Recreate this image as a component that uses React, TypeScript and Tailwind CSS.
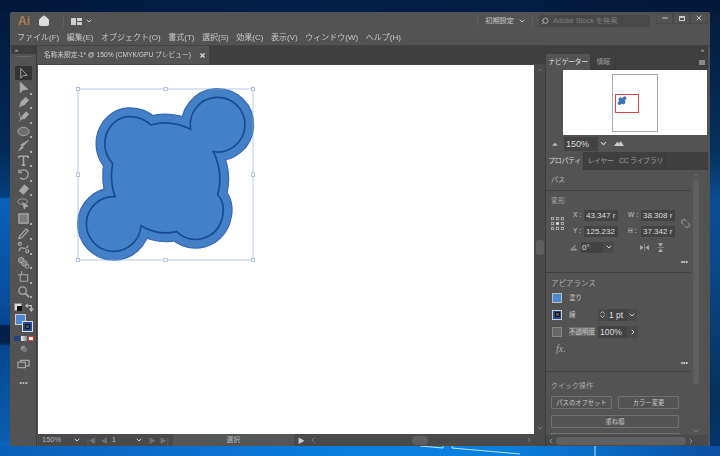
import React from "react";
import { Home, ChevronDown, ChevronUp, ChevronLeft, ChevronRight, Search, Minus, X, ChevronsUpDown, Unlink2 } from "lucide-react";

const FONT = "font-['Liberation_Sans','Noto_Sans_CJK_JP',sans-serif]";
const BLOB = "M377 148 A82 82 0 1 1 445 215 Q476 280 458 345 Q484 372 470 420 C452 478 380 498 335 455 Q280 468 228 437 A82 82 0 1 1 150 350 Q133 300 143 250 C95 200 125 115 190 110 Q228 108 258 135 Q315 118 377 148 Z";

const T = ({ children }: { children: React.ReactNode }) => (
  <svg viewBox="0 0 14 14" className="w-[13px] h-[13px]" fill="#a8a8a8" stroke="#a8a8a8" strokeWidth="1">{children}</svg>
);

const tools: { n: React.ReactNode; corner?: boolean; active?: boolean }[] = [
  { n: <path d="M4 1.5 L4 12 L6.8 9.3 L11 9 Z" fill="none" />, active: true },
  { n: <path d="M3.5 1 L3.5 12.5 L6.5 9.5 L11.5 9 Z" />, corner: true },
  { n: <path d="M9.5 1.5 L12.5 4.5 L8 9.5 L3 11 L4.5 6 Z M2 12.5 L4 10.5" />, corner: true },
  { n: <g><path d="M10 2 L12.5 4.5 L8.5 9 L4.5 10 L6 6 Z" /><path d="M3 2.5 C0 6 6 5 3 12" fill="none" /></g>, corner: true },
  { n: <ellipse cx="7" cy="7" rx="6" ry="4.5" fill="#6e6e6e" />, corner: true },
  { n: <path d="M12.5 1.5 L6 8 L4 6.5 Z M5 8 L2 12.5 L7 9" />, corner: true },
  { n: <path d="M2 2.5 H12 V4.5 M2 4.5 V2.5 M7 2.5 V12 M5 12 H9" fill="none" strokeWidth="1.6" />, corner: true },
  { n: <g fill="none" strokeWidth="1.4"><path d="M3 4 A5 5 0 1 1 3.5 10.5" /><path d="M2 1.5 V5 H5.5" /></g>, corner: true },
  { n: <path d="M8 2 L12.5 6 L7 12 L2.5 8.5 Z" />, corner: true },
  { n: <g fill="none"><ellipse cx="6" cy="5" rx="5" ry="3" /><path d="M6 6 L12 10 L9 10.5 L8 13 Z" fill="#a8a8a8" /></g> },
  { n: <rect x="2" y="2" width="10" height="10" fill="#7d7d7d" stroke="#bdbdbd" />, corner: true },
  { n: <path d="M10 2 L12 4 L5 11.5 L2 12.5 L3 9.5 Z" fill="none" strokeWidth="1.3" />, corner: true },
  { n: <g fill="none" strokeWidth="1.3"><path d="M2 11 C5 2 8 13 12 5" /><circle cx="3" cy="3" r="1.6" /><circle cx="11" cy="11" r="1.6" /></g>, corner: true },
  { n: <g><circle cx="4.5" cy="4.5" r="3" fill="#7d7d7d" /><circle cx="8" cy="8" r="3" fill="#7d7d7d" /><circle cx="11" cy="11" r="2" fill="none" /></g>, corner: true },
  { n: <path d="M3.5 5 H11.5 V12 H3.5 Z M1 5 H3.5 M5 1 V5" fill="none" strokeWidth="1.1" />, corner: true },
  { n: <g fill="none" strokeWidth="1.4"><circle cx="6" cy="6" r="4" /><path d="M9 9 L13 13" strokeWidth="2" /></g>, corner: true },
];

function Tools() {
  return (
    <div className="w-[26px] ml-px flex flex-col items-center bg-[#535353] border-r border-[#3c3c3c]">
      <div className="h-[8px] w-full bg-[#3e3e3e] text-[6px] leading-[8px] text-[#ccc] pl-[4px]">»</div>
      <div className="h-px w-[14px] mt-[2px] bg-[#6a6a6a]" />
      <div className="flex flex-col mt-[9px] gap-[0.55px]">
        {tools.map((t, i) => (
          <div key={i} className={`relative w-[17px] h-[14px] flex items-center justify-center rounded-[1px] ${t.active ? "bg-[#333]" : ""}`}>
            <T>{t.n}</T>
            {t.corner && <span className="absolute right-0 bottom-0 w-[2px] h-[2px] bg-[#aaa]" />}
          </div>
        ))}
      </div>
      <div className="flex w-[20px] justify-between mt-[5px] text-[#ddd]">
        <div className="relative w-[8px] h-[8px] bg-[#ddd] border border-[#888]">
          <span className="absolute right-[-1px] bottom-[-1px] w-[5px] h-[5px] bg-[#111]" />
        </div>
        <svg viewBox="0 0 10 10" className="w-[9px] h-[9px]" fill="none" stroke="#bbb" strokeWidth="1.3"><path d="M1 3 H7 V8 M5 6 L7 9 L9 6 M3 1 L1 3 L3 5" /></svg>
      </div>
      <div className="relative w-[18px] h-[18px] mt-[2px]">
        <div className="w-[11px] h-[11px] bg-[#4a88cf] border border-[#ccc]" />
        <div className="absolute right-0 bottom-0 w-[11px] h-[11px] bg-[#1b4c98] border border-[#ddd] flex items-center justify-center">
          <span className="w-[5px] h-[5px] bg-[#535353] border border-[#111]" />
        </div>
      </div>
      <div className="flex gap-px mt-[4px]">
        <span className="w-[6px] h-[5px] bg-[#1f3f7e]" />
        <span className="w-[6px] h-[5px] bg-[linear-gradient(90deg,#eee,#888)]" />
        <span className="w-[6px] h-[5px] bg-white border border-[#d33]" />
      </div>
      <svg viewBox="0 0 10 10" className="w-[8px] h-[8px] mt-[4px]"><circle cx="4" cy="4" r="3" fill="#999" /><circle cx="6" cy="6" r="3" fill="#777" /></svg>
      <svg viewBox="0 0 14 10" className="w-[13px] h-[10px] mt-[6px]" fill="#535353" stroke="#bbb"><rect x="4" y="1" width="9" height="6" /><rect x="1" y="3" width="8" height="6" /></svg>
      <div className="text-[#bbb] text-[8px] leading-[9px] mt-[9px]">•••</div>
    </div>
  );
}

function Artwork() {
  const pts = [[39, 27], [302, 27], [564, 27], [39, 284], [564, 284], [39, 540], [302, 540], [564, 540]];
  return (
    <svg viewBox="0 0 600 570" className="w-[200px] h-[190px] ml-[27px] mt-[15px]">
      <path d={BLOB} fill="#3968bb" stroke="#3968bb" strokeWidth="56" strokeLinejoin="round" />
      <path d={BLOB} fill="#4380c5" stroke="#4380c5" strokeWidth="49" strokeLinejoin="round" />
      <path d={BLOB} fill="#4380c5" stroke="#194a94" strokeWidth="5" />
      <rect x="39" y="27" width="525" height="513" fill="none" stroke="#8fadde" strokeWidth="2" />
      {pts.map(([x, y]) => (
        <rect key={`${x}-${y}`} x={x - 5} y={y - 5} width="10" height="10" fill="#fff" stroke="#8fadde" strokeWidth="2" />
      ))}
    </svg>
  );
}

function Status() {
  const G = "#6f6f6f";
  return (
    <div className="h-[12px] flex items-center bg-[#4a4a4a] text-[7.5px] text-[#b5b5b5] leading-none">
      <span className="w-[34px] pl-[4px]">150%</span>
      <ChevronDown size={8} strokeWidth={3} className="ml-[1px] text-[#ccc]" />
      <span className="ml-[6px] flex gap-[5px] text-[7px]" style={{ color: G }}><span>|◀</span><span>◀</span></span>
      <span className="ml-[3px] w-[24px] pl-[1px]">1</span>
      <ChevronDown size={8} strokeWidth={3} className="text-[#ccc]" />
      <span className="ml-[6px] flex gap-[4px] text-[7px]" style={{ color: G }}><span>▶</span><span>▶|</span></span>
      <span className="w-[121px] ml-[4px] h-full bg-[#555] text-center leading-[12px] text-[7px]">選択</span>
      <span className="ml-[4px] text-[7px] text-[#ccc]">▶</span>
      <ChevronLeft size={8} strokeWidth={2} className="ml-[4px] text-[#999]" />
      <div className="w-[84px]" />
      <span className="ml-[11px] w-[16px] h-[9px] rounded-full bg-[#5f5f5f]" />
      <div className="flex-1" />
      <ChevronRight size={8} strokeWidth={2} className="text-[#999] mr-[12px]" />
    </div>
  );
}

function Tab({ label, on, w }: { label: string; on?: boolean; w: number }) {
  return (
    <div style={{ width: w }} className={`h-full flex items-center justify-center text-[7px] whitespace-nowrap tracking-[-0.4px] border-r border-[#3a3a3a] ${on ? "bg-[#535353] text-[#d8d8d8]" : "text-[#9a9a9a]"}`}>{label}</div>
  );
}

function Field({ label, value, lw }: { label: string; value: string; lw: number }) {
  return (
    <div className="flex items-center">
      <span style={{ width: lw }} className="text-[6.5px] font-bold text-[#a5a5a5] pl-[1px] whitespace-nowrap">{label} :</span>
      <span className="w-[34px] h-[11px] bg-[#434343] text-[8px] leading-[11px] text-[#dcdcdc] pl-[2px] whitespace-nowrap">{value}</span>
    </div>
  );
}

function Divider() {
  return <div className="h-px w-[145px] bg-[#404040]" />;
}

function Panel() {
  return (
    <div className="w-[163px] flex flex-col bg-[#535353] border-l border-[#3c3c3c]">
      <div className="h-[8px] bg-[#3e3e3e] text-[6px] leading-[8px] text-[#ccc] text-right pr-[4px]">»</div>
      <div className="h-[16px] bg-[#3f3f3f] flex items-center">
        <Tab label="ナビゲーター" on w={45} />
        <Tab label="情報" w={25} />
        <div className="flex-1" />
        <div className="w-[6px] h-[5px] mr-[3px] bg-[#888]" />
      </div>
      <div className="h-[65px] flex">
        <div className="w-[17px]" />
        <div className="flex-1 bg-white flex items-center pl-[49px]">
          <div className="w-[46px] h-[58px] border border-[#aaa] bg-white pl-[2px] pt-[19px]">
            <div className="w-[24px] h-[19px] border border-[#e04545] pl-[1px] pt-[1px]">
              <svg viewBox="0 0 600 570" className="w-[10px] h-[9.5px]"><path d={BLOB} fill="#3a70b8" stroke="#3a70b8" strokeWidth="60" /></svg>
            </div>
          </div>
        </div>
        <div className="w-px" />
      </div>
      <div className="h-[17px] flex items-center text-[#ccc]">
        <svg viewBox="0 0 10 6" className="w-[6px] h-[4px] ml-[6px]" fill="#bbb"><path d="M0 6 L5 1 L10 6 Z" /></svg>
        <span className="ml-[6px] w-[34px] h-[14px] bg-[#434343] text-[9px] leading-[14px] pl-[2px] text-[#ddd]">150%</span>
        <ChevronDown size={9} strokeWidth={3} className="ml-[1px]" />
        <svg viewBox="0 0 12 6" className="w-[10px] h-[5px] ml-[6px]" fill="#ccc"><path d="M0 6 L4 1 L6 3 L8 0 L12 6 Z" /></svg>
      </div>
      <div className="h-[18px] bg-[#3f3f3f] flex items-center pr-[18px]">
        <Tab label="プロパティ" on w={38} />
        <Tab label="レイヤー" w={34} />
        <Tab label="CC ライブラリ" w={47} />
      </div>
      <div className="flex flex-1 min-h-0">
        <div className="w-[145px] flex flex-col text-[#a9a9a9] text-[7px] overflow-hidden">
          <div className="h-[20px] pl-[5px] leading-[20px] text-[#b5b5b5]">パス</div>
          <Divider />
          <div className="pl-[5px] mt-[3px] h-[14px] leading-[14px] text-[7px]">変形</div>
          <div className="flex mt-[2px] pl-[5px]">
            <svg viewBox="0 0 13 13" className="w-[13px] h-[13px] mt-[7px]" fill="none" stroke="#bbb" strokeWidth="0.8">
              {[1.5, 6.5, 11.5].map((y) => [1.5, 6.5, 11.5].map((x) => (
                <rect key={`${x}${y}`} x={x - 1.2} y={y - 1.2} width="2.4" height="2.4" fill={x === 6.5 && y === 6.5 ? "#fff" : "none"} />
              )))}
            </svg>
            <div className="flex flex-col gap-[5px] ml-[8px]">
              <div className="flex gap-[9px]"><Field label="X" value="43.347 r" lw={12} /><Field label="W" value="38.308 r" lw={14} /></div>
              <div className="flex gap-[9px]"><Field label="Y" value="125.232" lw={12} /><Field label="H" value="37.342 r" lw={14} /></div>
            </div>
            <Unlink2 size={11} strokeWidth={1.5} className="ml-[5px] mt-[8px] rotate-45 text-[#bbb]" />
          </div>
          <div className="flex items-center mt-[5px] pl-[24px] h-[11px]">
            <svg viewBox="0 0 10 8" className="w-[8px] h-[7px]" fill="none" stroke="#bbb"><path d="M9 7 H1 L7 1 M6 7 V4" /></svg>
            <span className="ml-[3px] w-[22px] h-[11px] bg-[#434343] text-[#ddd] text-[8px] leading-[11px] pl-[1px]">0°</span>
            <span className="w-[11px] h-[11px] bg-[#4a4a4a] flex items-center justify-center"><ChevronDown size={8} strokeWidth={3} className="text-[#ccc]" /></span>
            <svg viewBox="0 0 10 8" className="w-[9px] h-[7px] ml-[26px]" fill="#aaa"><path d="M0 1 L4 4 L0 7 Z M10 1 L6 4 L10 7 Z M4.7 0 H5.3 V8 H4.7 Z" /></svg>
            <svg viewBox="0 0 8 10" className="w-[7px] h-[9px] ml-[8px]" fill="#aaa"><path d="M1 0 L4 4 L7 0 Z M1 10 L4 6 L7 10 Z M0 4.7 H8 V5.3 H0 Z" /></svg>
          </div>
          <div className="h-[11px] mt-[3px] text-right pr-[3px] text-[7px] leading-[11px] text-[#ccc]">•••</div>
          <div className="mt-[5px]"><Divider /></div>
          <div className="pl-[5px] mt-[5px] h-[12px] leading-[12px] text-[7.5px]">アピアランス</div>
          <div className="flex items-center pl-[6px] mt-[3px] h-[10px] text-[#c5c5c5] text-[6.5px]">
            <span className="w-[10px] h-[10px] bg-[#4a88cf] border border-[#bbb]" />
            <span className="ml-[7px]">塗り</span>
          </div>
          <div className="flex items-center pl-[6px] mt-[6px] h-[12px] text-[#c5c5c5] text-[6.5px]">
            <span className="w-[10px] h-[10px] bg-[#1b4c98] border border-[#ccc] flex items-center justify-center"><span className="w-[5px] h-[5px] bg-[#535353] border border-[#111]" /></span>
            <span className="ml-[7px] w-[26px]">線</span>
            <span className="ml-[3px] w-[10px] h-[12px] bg-[#4a4a4a] flex items-center"><ChevronsUpDown size={9} className="text-[#ccc]" /></span>
            <span className="w-[19px] h-[12px] bg-[#434343] text-[8.5px] leading-[12px] text-[#ddd] pl-[1px]">1 pt</span>
            <span className="w-[10px] h-[12px] bg-[#4a4a4a] flex items-center justify-center"><ChevronDown size={8} strokeWidth={3} className="text-[#ccc]" /></span>
          </div>
          <div className="flex items-center pl-[6px] mt-[5px] h-[12px] text-[#c5c5c5] text-[6.5px]">
            <span className="w-[10px] h-[10px] border border-[#888] bg-[#666]" />
            <span className="ml-[7px] w-[26px] whitespace-nowrap bg-[#6a6a6a]">不透明度</span>
            <span className="ml-[3px] w-[29px] h-[12px] bg-[#434343] text-[8.5px] leading-[12px] text-[#ddd] pl-[2px]">100%</span>
            <span className="w-[11px] h-[12px] bg-[#4a4a4a] flex items-center justify-center"><ChevronRight size={8} strokeWidth={3} className="text-[#ccc]" /></span>
          </div>
          <div className="pl-[10px] mt-[5px] h-[11px] font-['Liberation_Serif',serif] italic text-[10px] leading-[11px] text-[#aaa]">fx.</div>
          <div className="h-[11px] mt-[3px] text-right pr-[3px] text-[7px] leading-[11px] text-[#ccc]">•••</div>
          <div className="mt-[3px]"><Divider /></div>
          <div className="pl-[5px] mt-[8px] h-[12px] leading-[12px] text-[7px]">クイック操作</div>
          <div className="flex gap-[6px] pl-[5px] mt-[4px] text-[#c8c8c8] text-[6.3px]">
            <div className="w-[61px] h-[13px] border border-[#707070] rounded-[1px] text-center leading-[11px] whitespace-nowrap">パスのオフセット</div>
            <div className="w-[61px] h-[13px] border border-[#707070] rounded-[1px] text-center leading-[11px] whitespace-nowrap">カラー変更</div>
          </div>
          <div className="ml-[5px] mt-[6px] w-[128px] h-[13px] border border-[#707070] rounded-[1px] text-center text-[#c8c8c8] text-[6.3px] leading-[11px]">重ね順</div>
          <div className="ml-[5px] mt-[5px] w-[128px] h-[4px] border-t border-x border-[#707070] rounded-[1px]" />
        </div>
        <div className="w-[7px] ml-[1px] flex flex-col items-center pt-[1px]">
          <ChevronUp size={8} className="text-[#888] shrink-0" />
          <div className="w-[6px] h-[205px] bg-[#5e5e5e] rounded-full" />
          <div className="flex-1" />
          <ChevronDown size={8} className="text-[#999] shrink-0" />
        </div>
      </div>
      <div className="h-[11px] flex items-center bg-[#4a4a4a] text-[#aaa]">
        <ChevronLeft size={8} className="ml-[1px]" />
        <div className="w-[130px] h-[8px] ml-[1px] rounded-full bg-[#5f5f5f]" />
        <ChevronRight size={8} className="ml-[1px]" />
      </div>
    </div>
  );
}

export default function App() {
  return (
    <div className={`${FONT} relative w-[720px] h-[456px] overflow-hidden pl-[10px] pr-[10px] pt-[12px] pb-[10px] bg-[linear-gradient(180deg,#02183a_0px,#032a58_150px,#04407f_197px,#0a62ba_199px,#074e9c_300px,#054590_324px,#02204a_326px,#02204a_343px,#05478f_346px,#0a5fb0_440px,#0a6fd0_456px)]`}>
      <div className="absolute right-0 top-0 w-[10px] h-[446px] bg-[linear-gradient(180deg,#041a38_0px,#05305f_150px,#0a4d90_200px,#0a4a8a_260px,#05305f_400px,#04356e_446px)]" />
      <div className="absolute top-0 left-0 right-0 h-[12px] bg-[linear-gradient(90deg,#02183a_0%,#03204a_40%,#04193a_100%)]" />
      <div className="absolute left-0 right-0 bottom-0 h-[10px] bg-[linear-gradient(90deg,#0a5fb8_0%,#0b7fe0_50%,#0a80dd_70%,#0a50a4_100%)]">
        <svg viewBox="0 0 720 10" className="w-full h-full" fill="none" stroke="#bfe6ff" strokeWidth="1">
          <path d="M420 0 L443 2 M443 0 V2 M452 0 V2 L520 8 M595 0 V10" />
        </svg>
      </div>
      <div className="relative w-full h-full flex flex-col bg-[#535353] rounded-t-[2px] blur-[0.35px]">
        <div className="h-[18px] flex items-center text-[#c8c8c8]">
          <span className="ml-[8px] w-[12px] text-[12px] font-bold leading-none text-[#ad7b55]">Ai</span>
          <Home size={12} fill="#ddd" className="ml-[8px] text-[#ddd]" />
          <div className="ml-[13px] w-px h-[12px] bg-[#5e5e5e]" />
          <svg viewBox="0 0 11 7" className="ml-[7px] w-[11px] h-[7px]" fill="#ccc"><path d="M0 0 H5 V7 H0 Z M6 0 H11 V3 H6 Z M6 4 H11 V7 H6 Z" /></svg>
          <ChevronDown size={8} strokeWidth={3} className="ml-[3px]" />
          <div className="flex-1" />
          <div className="w-px h-[12px] bg-[#5e5e5e]" />
          <span className="ml-[7px] text-[7.2px] text-[#c8c8c8] whitespace-nowrap">初期設定</span>
          <ChevronDown size={8} strokeWidth={3} className="ml-[4px]" />
          <div className="ml-[6px] w-px h-[12px] bg-[#5e5e5e]" />
          <div className="ml-[6px] w-[111px] h-[12px] bg-[#484848] rounded-[1px] flex items-center text-[7.2px] text-[#7d7d7d]">
            <Search size={8} strokeWidth={2.5} className="ml-[2px] -scale-x-100 text-[#bbb]" />
            <span className="ml-[4px] whitespace-nowrap">Adobe Stock を検索</span>
          </div>
          <div className="ml-[6px] mr-[2px] -mt-[6px] flex h-[11px]">
            <span className="w-[17px] border border-[#484848] flex items-center justify-center"><Minus size={8} strokeWidth={3} /></span>
            <span className="w-[17px] border border-[#484848] flex items-center justify-center"><span className="w-[6px] h-[5px] border border-[#ccc] border-t-2" /></span>
            <span className="w-[18px] border border-[#484848] flex items-center justify-center"><X size={8} strokeWidth={3} /></span>
          </div>
        </div>
        <div className="h-[16px] flex items-center gap-[7.6px] pl-[7px] text-[8px] text-[#c9c9c9] border-b border-[#424242] whitespace-nowrap">
          {["ファイル(F)", "編集(E)", "オブジェクト(O)", "書式(T)", "選択(S)", "効果(C)", "表示(V)", "ウィンドウ(W)", "ヘルプ(H)"].map((m) => (
            <span key={m}>{m}</span>
          ))}
        </div>
        <div className="flex-1 flex min-h-0 pr-[2px]">
          <Tools />
          <div className="w-[507px] ml-px flex flex-col">
            <div className="h-[18px] bg-[#3f3f3f] flex items-center">
              <div className="w-[171px] h-full bg-[#535353] flex items-center pl-[6px] text-[6.7px] text-[#d0d0d0] whitespace-nowrap">
                <span className="w-[152px]">名称未設定-1* @ 150% (CMYK/GPU プレビュー)</span>
                <X size={7} strokeWidth={4} className="ml-[3px] text-[#ddd]" />
              </div>
            </div>
            <div className="flex-1 flex min-h-0">
              <div className="flex-1 bg-white overflow-hidden border-t border-[#444]"><Artwork /></div>
              <div className="w-[11px] bg-[#4b4b4b] flex flex-col items-center pt-[2px] pb-[2px]">
                <ChevronUp size={8} strokeWidth={2} className="text-[#888]" />
                <div className="flex-1 flex items-center"><span className="w-[8px] h-[15px] -mt-[4px] bg-[#5f5f5f] rounded-[3px]" /></div>
                <ChevronDown size={8} strokeWidth={2} className="text-[#999]" />
              </div>
            </div>
            <Status />
          </div>
          <Panel />
        </div>
      </div>
    </div>
  );
}
